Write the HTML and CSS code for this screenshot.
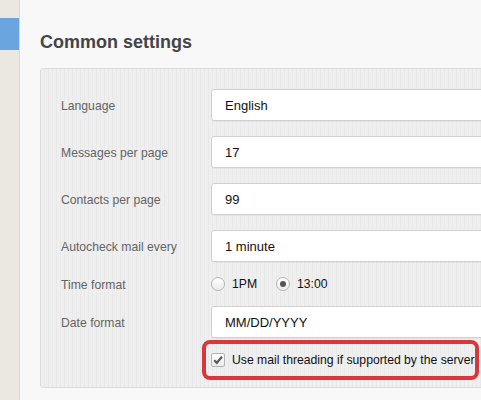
FILE: index.html
```html
<!DOCTYPE html>
<html>
<head>
<meta charset="utf-8">
<link rel="stylesheet" href="styles.css">
</head>
<body>
<div class="app">
  <aside class="sidebar"><div class="nav-active"></div></aside>
  <main class="main">
    <h1 class="title">Common settings</h1>
    <section class="panel">
      <div class="row">
        <label class="label">Language</label>
        <div class="field">English</div>
      </div>
      <div class="row">
        <label class="label">Messages per page</label>
        <div class="field">17</div>
      </div>
      <div class="row">
        <label class="label">Contacts per page</label>
        <div class="field">99</div>
      </div>
      <div class="row">
        <label class="label">Autocheck mail every</label>
        <div class="field">1 minute</div>
      </div>
      <div class="row row-small">
        <label class="label">Time format</label>
        <div class="radios">
          <span class="radio"></span><span class="opt">1PM</span>
          <span class="radio checked"></span><span class="opt">13:00</span>
        </div>
      </div>
      <div class="row">
        <label class="label">Date format</label>
        <div class="field">MM/DD/YYYY</div>
      </div>
      <div class="row row-small">
        <span class="label"></span>
        <div class="check-wrap">
          <span class="checkbox"><svg width="12" height="12" viewBox="0 0 12 12"><path d="M2.2 6.3 L4.8 8.8 L10 2.8" fill="none" stroke="#5a5a5a" stroke-width="2.2"/></svg></span>
          <span class="opt">Use mail threading if supported by the server</span>
          <span class="highlight"></span>
        </div>
      </div>
    </section>
  </main>
</div>
</body>
</html>
```
FILE: styles.css
```css
html, body {
  margin: 0;
  padding: 0;
  height: 100%;
  overflow: hidden;
  background: #f8f8f8;
  font-family: "Liberation Sans", Arial, sans-serif;
}
.app {
  display: flex;
  height: 400px;
  width: 800px;
}
.sidebar {
  width: 19px;
  flex: none;
  background: #ebe8e2;
  border-right: 1px solid #dcd8cf;
}
.nav-active {
  margin-top: 18px;
  height: 32px;
  background: #6aa5df;
}
.main {
  flex: 1;
  padding-left: 20px;
  background: #f8f8f8;
}
.title {
  margin: 31px 0 15px;
  font-size: 18px;
  line-height: 22px;
  font-weight: bold;
  color: #444;
}
.panel {
  border: 1px solid #dcdcdc;
  border-radius: 3px;
  padding: 20px;
  background: repeating-linear-gradient(90deg, #efefef 0px, #efefef 3px, #e9e9e9 3px, #e9e9e9 4px);
  display: flex;
  flex-direction: column;
  gap: 15px;
  width: 700px;
}
.row {
  display: flex;
  align-items: center;
  height: 32px;
}
.row-small {
  height: 14px;
}
.label {
  width: 150px;
  flex: none;
  font-size: 12.2px;
  color: #646464;
  padding-top: 2px;
}
.field {
  width: 400px;
  height: 30px;
  box-sizing: content-box;
  background: #fff;
  border: 1px solid #d0d0d0;
  border-radius: 3px;
  padding-left: 13px;
  font-size: 13px;
  line-height: 31px;
  color: #111;
  box-shadow: 0 1px 0 rgba(0,0,0,0.04);
}
.radios {
  display: flex;
  align-items: center;
}
.radio {
  width: 12px;
  height: 12px;
  border: 1px solid #b4b4b4;
  border-radius: 50%;
  background: linear-gradient(#fff, #ececec);
  display: flex;
  align-items: center;
  justify-content: center;
}
.radio.checked::after {
  content: "";
  width: 6px;
  height: 6px;
  border-radius: 50%;
  background: #555;
}
.opt {
  font-size: 12.2px;
  color: #111;
  margin-left: 7px;
}
.radios .opt:nth-child(2) {
  margin-right: 19px;
}
.check-wrap {
  position: relative;
  display: flex;
  align-items: center;
}
.checkbox {
  width: 12px;
  height: 12px;
  border: 1px solid #b4b4b4;
  border-radius: 2px;
  background: linear-gradient(#fff, #ececec);
  display: flex;
  align-items: center;
  justify-content: center;
}
.highlight {
  position: absolute;
  left: -9px;
  top: -13px;
  width: 269px;
  height: 32px;
  border: 4px solid #d8383b;
  border-radius: 8px;
}
```
